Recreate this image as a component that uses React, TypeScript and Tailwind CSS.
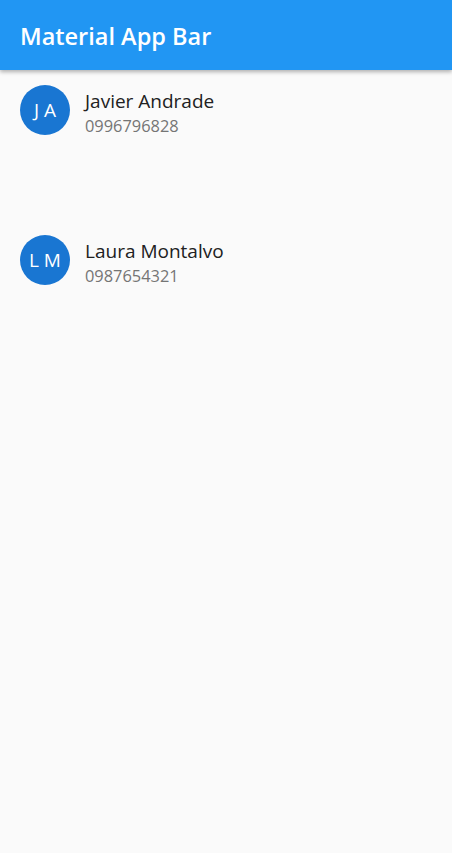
import React from "react";

const contacts = [
  { initials: "J A", name: "Javier Andrade", phone: "0996796828" },
  { initials: "L M", name: "Laura Montalvo", phone: "0987654321" },
];

export default function App() {
  return (
    <div
      className="w-[452px] h-[853px] bg-[#fafafa] flex flex-col"
      style={{ fontFamily: '"Open Sans", "Noto Sans", sans-serif' }}
    >
      <div className="h-[70px] bg-[#2196f3] flex items-center px-5 shadow-[0_2px_4px_rgba(0,0,0,0.3)] relative z-10">
        <span className="text-white text-[23.5px] font-semibold leading-[28px] pt-[2px]">Material App Bar</span>
      </div>
      <div className="flex flex-col gap-[100px] pt-[15px]">
        {contacts.map((c) => (
          <div key={c.name} className="flex items-center px-5 h-[50px]">
            <div className="w-[50px] h-[50px] rounded-full bg-[#1976d2] flex items-center justify-center text-white text-[19px]">
              {c.initials}
            </div>
            <div className="ml-[15px] flex flex-col pt-[6px]">
              <span className="text-[#212121] text-[19px] leading-[25px]">{c.name}</span>
              <span className="text-[#757575] text-[16.4px] leading-[23px]">{c.phone}</span>
            </div>
          </div>
        ))}
      </div>
    </div>
  );
}
